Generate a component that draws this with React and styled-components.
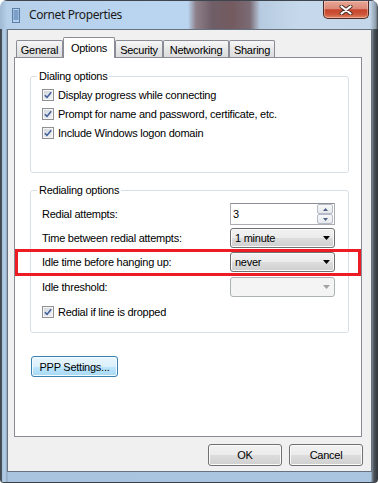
import React from "react";
import styled, { createGlobalStyle, css } from "styled-components";

const GlobalStyle = createGlobalStyle`
  html, body { margin: 0; padding: 0; background: #ffffff; }
  body { font-family: "Liberation Sans", Arial, sans-serif; }
`;

const Window = styled.div`
  width: 378px;
  height: 483px;
  display: flex;
  flex-direction: column;
  border-radius: 7px 7px 4px 4px;
  overflow: hidden;
  font-family: "Liberation Sans", Arial, sans-serif;
  font-size: 11px;
  letter-spacing: -0.25px;
  color: #000;
`;

const TitleBar = styled.div`
  height: 28px;
  flex-shrink: 0;
  display: flex;
  align-items: flex-start;
  padding-left: 12px;
  border-top: 1px solid #3e454e;
  background: linear-gradient(to right,
    #9fb9d2 0px, #b7d0ea 7px, #b9d4ef 120px, #bad5f0 188px,
    #8d7f89 196px, #6f5e67 212px, #735a5f 232px, #7b6b74 250px,
    #b7cbe0 260px, #c6d9ec 300px, #c3d6ea 370px, #8b9aa8 376px, #3c4249 378px);
`;

const AppIcon = styled.svg`
  margin-top: 7px;
  flex-shrink: 0;
`;

const Title = styled.span`
  margin: 6px 0 0 9px;
  font-family: "Noto Sans", "Open Sans", sans-serif;
  font-size: 12px;
  line-height: 16px;
  letter-spacing: -0.4px;
  color: #1b1b1b;
`;

const CloseButton = styled.div`
  margin-left: auto;
  margin-right: 9px;
  width: 46px;
  height: 18px;
  box-sizing: border-box;
  display: flex;
  align-items: center;
  justify-content: center;
  border: 1px solid #4e2a23;
  border-top: none;
  border-radius: 0 0 5px 5px;
  background: linear-gradient(#e7a797 0%, #dc8a77 45%, #c7452d 52%, #cc5538 78%, #e08767 100%);
  box-shadow: inset 0 0 0 1px rgba(255, 220, 210, 0.45);
`;

const Frame = styled.div`
  flex: 1;
  display: flex;
  padding: 0 6px 10px 7px;
  border-bottom: 1px solid #3a4048;
  background: linear-gradient(to right,
    #3f454c 0px, #4c535b 2px, #a3bfda 2px, #b5cee7 5px, #8fa6bd 7px,
    #a9c4df 8px, #aac5e0 371px, #7d8995 372px, #4a525a 374px, #30353b 378px);
`;

const Client = styled.div`
  flex: 1;
  display: flex;
  flex-direction: column;
  background: #f0f0f0;
  border: 1px solid #66727f;
  padding: 7px 9px 0 6px;
`;

const TabRow = styled.div`
  display: flex;
  align-items: flex-end;
  height: 20px;
  padding-left: 2px;
`;

const Tab = styled.div`
  width: ${p => p.$w}px;
  height: 17px;
  box-sizing: border-box;
  display: flex;
  align-items: center;
  justify-content: center;
  padding-top: 1px;
  border: 1px solid #898c95;
  border-bottom: none;
  border-radius: 2px 2px 0 0;
  background: linear-gradient(#f6f6f6, #e8e8e8 50%, #dcdcdc);
  ${p => p.$active && css`
    height: 21px;
    margin-bottom: -1px;
    padding-top: 0;
    padding-bottom: 1px;
    background: #ffffff;
    position: relative;
    z-index: 1;
  `}
`;

const Panel = styled.div`
  width: 348px;
  height: 380px;
  box-sizing: border-box;
  display: flex;
  flex-direction: column;
  align-items: flex-start;
  background: #ffffff;
  border: 1px solid #898c95;
  padding: 0 12px 0 15px;
`;

const Group = styled.fieldset`
  align-self: stretch;
  margin: ${p => p.$top}px 0 0 0;
  padding: 0;
  border: 1px solid #d5dfe5;
  border-radius: 3px;
  min-width: 0;
`;

const Legend = styled.legend`
  margin-left: 6px;
  padding: 0 2px;
  line-height: 13px;
`;

const GroupBody = styled.div`
  padding: ${p => p.$pad};
`;

const CheckRow = styled.div`
  display: flex;
  align-items: center;
  gap: 4px;
  height: ${p => p.$h || 19}px;
`;

const Box = styled.span`
  width: 12px;
  height: 12px;
  box-sizing: border-box;
  display: flex;
  align-items: center;
  justify-content: center;
  border: 1px solid #8f9091;
  background: linear-gradient(135deg, #cfd3da, #f3f4f6);
  box-shadow: inset 0 0 0 1px #f6f6f6;
`;

const FieldRow = styled.div`
  position: relative;
  display: flex;
  align-items: center;
  justify-content: space-between;
  height: ${p => p.$h}px;
`;

const Highlight = styled.div`
  position: absolute;
  left: -27px;
  right: -26px;
  top: -1px;
  bottom: -2px;
  border: 3px solid #ed1c24;
  pointer-events: none;
`;

const Spinner = styled.div`
  width: 105px;
  height: 22px;
  box-sizing: border-box;
  display: flex;
  align-items: center;
  border: 1px solid #abadb3;
  border-top-color: #8c8f95;
  background: #fff;
  padding: 0 1px 0 2px;
`;

const SpinText = styled.span`
  flex: 1;
`;

const SpinCol = styled.div`
  display: flex;
  flex-direction: column;
`;

const SpinBtn = styled.div`
  width: 16px;
  height: 10px;
  box-sizing: border-box;
  display: flex;
  align-items: center;
  justify-content: center;
  border: 1px solid #b5bcc7;
  border-radius: 2px;
  background: linear-gradient(#f8f8f8, #e6e8ec);
`;

const Combo = styled.div`
  width: 105px;
  height: 20px;
  box-sizing: border-box;
  display: flex;
  align-items: center;
  justify-content: space-between;
  padding: 0 4px;
  border: 1px solid #707070;
  border-radius: 3px;
  background: linear-gradient(#f2f2f2 0%, #ebebeb 50%, #dddddd 50%, #cfcfcf 100%);
  box-shadow: inset 0 0 0 1px #fbfbfb;
  ${p => p.$disabled && css`
    border-color: #adb2b5;
    background: #f4f4f4;
    box-shadow: none;
  `}
`;

const Button = styled.div`
  width: ${p => p.$w}px;
  height: ${p => p.$h}px;
  box-sizing: border-box;
  display: flex;
  align-items: center;
  justify-content: center;
  border: 1px solid #707070;
  border-radius: 3px;
  background: linear-gradient(#f2f2f2 0%, #ebebeb 50%, #dddddd 50%, #cfcfcf 100%);
  box-shadow: inset 0 0 0 1px #fbfbfb;
  ${p => p.$hot && css`
    border-color: #3c7fb1;
    background: linear-gradient(#eaf6fd 0%, #d9f0fc 50%, #bee6fd 50%, #a7d9f5 100%);
    box-shadow: inset 0 0 0 1px #f4fbff;
  `}
`;

const PPPButton = styled(Button)`
  margin: 23px 0 0 1px;
`;

const ButtonRow = styled.div`
  display: flex;
  justify-content: flex-end;
  gap: 7px;
  margin: 7px -1px 0 0;
`;

const Check = () => (
  <Box>
    <svg width="8" height="8" viewBox="0 0 8 8">
      <path d="M0.8 4.2 L3 6.4 L7.2 1.2" fill="none" stroke="#41609c" strokeWidth="1.6" />
    </svg>
  </Box>
);

const Arrow = ({ color = "#000" }) => (
  <svg width="7" height="4" viewBox="0 0 7 4">
    <polygon points="0,0 7,0 3.5,4" fill={color} />
  </svg>
);

const CheckItem = ({ label, h }) => (
  <CheckRow $h={h}>
    <Check />
    <span>{label}</span>
  </CheckRow>
);

const tabs = [
  { label: "General", w: 47 },
  { label: "Options", w: 52, active: true },
  { label: "Security", w: 48 },
  { label: "Networking", w: 66 },
  { label: "Sharing", w: 46 },
];

export default function App() {
  return (
    <>
      <GlobalStyle />
      <Window>
        <TitleBar>
          <AppIcon width="8" height="15" viewBox="0 0 8 15">
            <rect x="0.5" y="0.5" width="7" height="14" fill="#b9d2ec" stroke="#5b7fa8" />
            {[3, 5, 7, 9, 11].map(y => (
              <line key={y} x1="1.5" x2="6.5" y1={y} y2={y} stroke="#3d6da6" strokeWidth="1" />
            ))}
          </AppIcon>
          <Title>Cornet Properties</Title>
          <CloseButton>
            <svg width="14" height="10" viewBox="0 0 14 10">
              <path d="M2.5 1.5 L11.5 8.5 M11.5 1.5 L2.5 8.5" stroke="#4a2b25" strokeWidth="4" strokeLinecap="round" />
              <path d="M2.5 1.5 L11.5 8.5 M11.5 1.5 L2.5 8.5" stroke="#ffffff" strokeWidth="2.2" strokeLinecap="round" />
            </svg>
          </CloseButton>
        </TitleBar>
        <Frame>
          <Client>
            <TabRow>
              {tabs.map(t => (
                <Tab key={t.label} $w={t.w} $active={t.active}>{t.label}</Tab>
              ))}
            </TabRow>
            <Panel>
              <Group $top={12}>
                <Legend>Dialing options</Legend>
                <GroupBody $pad="2px 0 30px 11px">
                  <CheckItem label="Display progress while connecting" />
                  <CheckItem label="Prompt for name and password, certificate, etc." />
                  <CheckItem label="Include Windows logon domain" />
                </GroupBody>
              </Group>
              <Group $top={11}>
                <Legend>Redialing options</Legend>
                <GroupBody $pad="5px 13px 8px 11px">
                  <FieldRow $h={24}>
                    <span>Redial attempts:</span>
                    <Spinner>
                      <SpinText>3</SpinText>
                      <SpinCol>
                        <SpinBtn>
                          <svg width="5" height="3" viewBox="0 0 5 3"><polygon points="0,3 5,3 2.5,0" fill="#4d6185" /></svg>
                        </SpinBtn>
                        <SpinBtn>
                          <svg width="5" height="3" viewBox="0 0 5 3"><polygon points="0,0 5,0 2.5,3" fill="#4d6185" /></svg>
                        </SpinBtn>
                      </SpinCol>
                    </Spinner>
                  </FieldRow>
                  <FieldRow $h={24}>
                    <span>Time between redial attempts:</span>
                    <Combo><span>1 minute</span><Arrow /></Combo>
                  </FieldRow>
                  <FieldRow $h={24}>
                    <span>Idle time before hanging up:</span>
                    <Combo><span>never</span><Arrow /></Combo>
                    <Highlight />
                  </FieldRow>
                  <FieldRow $h={26}>
                    <span>Idle threshold:</span>
                    <Combo $disabled><span /><Arrow color="#a3a3a3" /></Combo>
                  </FieldRow>
                  <CheckItem label="Redial if line is dropped" h={24} />
                </GroupBody>
              </Group>
              <PPPButton $w={87} $h={21} $hot>PPP Settings...</PPPButton>
            </Panel>
            <ButtonRow>
              <Button $w={74} $h={22}>OK</Button>
              <Button $w={74} $h={22}>Cancel</Button>
            </ButtonRow>
          </Client>
        </Frame>
      </Window>
    </>
  );
}
